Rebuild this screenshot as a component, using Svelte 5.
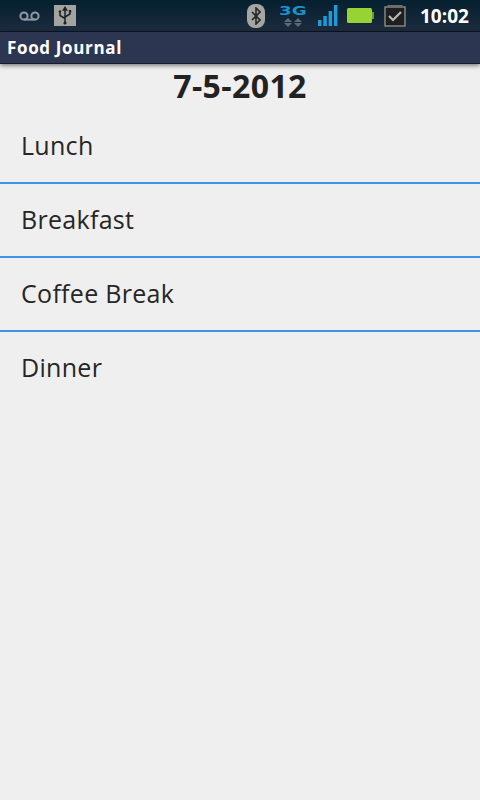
<script lang="ts">
  const meals = ['Lunch', 'Breakfast', 'Coffee Break', 'Dinner']
</script>

<div class="screen">
  <div class="status">
    <div class="left">
      <svg class="voicemail" width="24" height="12" viewBox="0 0 24 12" fill="none" stroke="#8f9aa3" stroke-width="2">
        <circle cx="6" cy="6" r="3.6" />
        <circle cx="17" cy="6" r="3.6" />
        <path d="M6 9.6h11" />
      </svg>
      <div class="usb">
        <svg width="22" height="22" viewBox="0 0 22 22" fill="none" stroke="#1c2226" stroke-width="1.5">
          <path d="M11 3v16" />
          <path d="M6 7v3.5l5 3M16 6.5v2.5l-5 3" />
          <path d="M11 2.5l-1.6 2.5h3.2z" fill="#1c2226" />
          <circle cx="6" cy="6.5" r="1.2" fill="#1c2226" stroke="none" />
          <rect x="14.8" y="5" width="2.4" height="2.4" fill="#1c2226" stroke="none" />
          <circle cx="11" cy="18" r="1.6" fill="#1c2226" stroke="none" />
        </svg>
      </div>
    </div>
    <div class="right">
      <div class="bluetooth">
        <svg width="10" height="18" viewBox="0 0 10 18" fill="none" stroke="#22282c" stroke-width="1.6">
          <path d="M1 5l8 8-4 4V1l4 4-8 8" />
        </svg>
      </div>
      <div class="network">
        <span class="three-g">3G</span>
        <svg width="20" height="9" viewBox="0 0 20 9" fill="#5d6a74">
          <path d="M5 0l4 4H1zM1 5h8l-4 4zM15 0l4 4h-8zM11 5h8l-4 4z" />
        </svg>
      </div>
      <svg class="signal" width="20" height="21" viewBox="0 0 20 21" fill="#1f9bd8">
        <rect x="0" y="15" width="3.5" height="6" />
        <rect x="5.3" y="11" width="3.5" height="10" />
        <rect x="10.6" y="6" width="3.5" height="15" />
        <rect x="15.9" y="0" width="3.5" height="21" />
      </svg>
      <svg class="battery" width="27" height="15" viewBox="0 0 27 15">
        <rect x="0" y="0" width="25" height="15" rx="1.5" fill="#97d332" />
        <rect x="25" y="4" width="2" height="7" fill="#6f9a2a" />
      </svg>
      <svg class="calendar" width="22" height="22" viewBox="0 0 22 22" fill="none">
        <rect x="1" y="2" width="20" height="19" fill="#1f1f20" stroke="#8b8b88" stroke-width="1.4" />
        <path d="M3.5 1h15" stroke="#6e6e6c" stroke-width="2" />
        <path d="M5 11l4 4 8-8" stroke="#b8b8b5" stroke-width="2.2" />
      </svg>
      <span class="time">10:02</span>
    </div>
  </div>

  <div class="titlebar">Food Journal</div>

  <div class="content">
    <h1>7-5-2012</h1>
    <ul>
      {#each meals as meal}
        <li>{meal}</li>
      {/each}
    </ul>
  </div>
</div>

<style>
  :global(body) {
    margin: 0;
    background: #efefef;
  }

  .screen {
    width: 480px;
    height: 800px;
    display: flex;
    flex-direction: column;
    overflow: hidden;
    font-family: 'Open Sans', 'DejaVu Sans', sans-serif;
  }

  .status {
    height: 31px;
    flex: none;
    display: flex;
    justify-content: space-between;
    align-items: center;
    background: linear-gradient(#05202f, #1c2b3d);
    border-bottom: 1px solid #0c1420;
  }

  .left {
    display: flex;
    align-items: center;
    gap: 12px;
    padding-left: 18px;
  }

  .usb {
    width: 22px;
    height: 21px;
    background: #a3a3a0;
    display: flex;
    align-items: center;
    justify-content: center;
  }

  .right {
    display: flex;
    align-items: center;
    padding-right: 12px;
  }

  .bluetooth {
    width: 18px;
    height: 24px;
    border-radius: 8px;
    background: #a5a5a2;
    display: flex;
    align-items: center;
    justify-content: center;
  }

  .network {
    width: 26px;
    margin-left: 15px;
    display: flex;
    flex-direction: column;
    align-items: center;
    gap: 1px;
  }

  .three-g {
    font-family: 'DejaVu Sans', sans-serif;
    font-size: 13px;
    font-weight: 700;
    line-height: 12px;
    color: #1f8fc9;
    transform: scaleX(1.4);
  }

  .signal {
    margin-left: 12px;
  }

  .battery {
    margin-left: 9px;
  }

  .calendar {
    margin-left: 10px;
  }

  .time {
    margin-left: 14px;
    width: 48px;
    font-size: 19px;
    font-weight: 700;
    color: #fff;
  }

  .titlebar {
    height: 32px;
    flex: none;
    box-sizing: border-box;
    padding-left: 7px;
    font-size: 17px;
    font-weight: 700;
    letter-spacing: 0.65px;
    line-height: 32px;
    color: #fff;
    background: #2d3650;
    border-bottom: 1px solid #161b28;
    box-shadow: 0 2px 4px rgba(0, 0, 0, 0.45);
    position: relative;
  }

  .content {
    flex: 1;
    background: #efefef;
  }

  h1 {
    margin: 0;
    height: 46px;
    font-size: 32px;
    font-weight: 700;
    letter-spacing: 0.4px;
    line-height: 44px;
    text-align: center;
    color: #222;
  }

  ul {
    list-style: none;
    margin: 0;
    padding: 0;
  }

  li {
    box-sizing: border-box;
    height: 74px;
    padding-left: 21px;
    font-size: 25px;
    letter-spacing: 0.3px;
    line-height: 71px;
    color: #262626;
    border-bottom: 2px solid #3f94e8;
  }

  li:last-child {
    border-bottom: none;
  }
</style>
